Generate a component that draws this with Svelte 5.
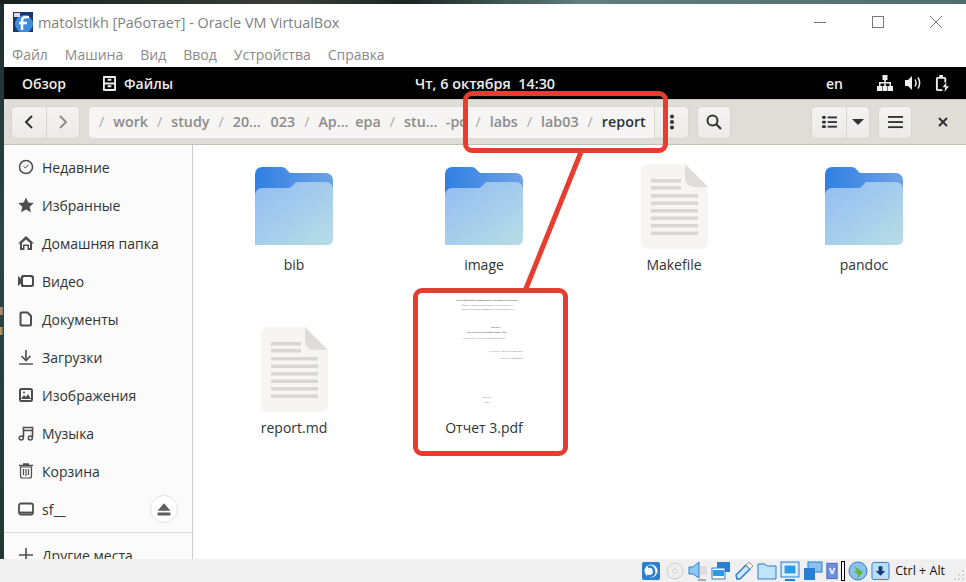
<script>
  const menu = ["Файл", "Машина", "Вид", "Ввод", "Устройства", "Справка"];
  const crumbs = [
    { t: "work" },
    { t: "study" },
    { t: "20… 023", short: true },
    { t: "Ар… ера", short: true },
    { t: "stu… -рс", short: true },
    { t: "labs" },
    { t: "lab03" },
  ];
  const places = [
    ["Недавние", "clock"],
    ["Избранные", "star"],
    ["Домашняя папка", "home"],
    ["Видео", "video"],
    ["Документы", "doc"],
    ["Загрузки", "down"],
    ["Изображения", "image"],
    ["Музыка", "music"],
    ["Корзина", "trash"],
    ["sf__", "drive"],
  ];
  const files = [
    { name: "bib", kind: "folder" },
    { name: "image", kind: "folder" },
    { name: "Makefile", kind: "text" },
    { name: "pandoc", kind: "folder" },
    { name: "report.md", kind: "text" },
    { name: "Отчет 3.pdf", kind: "pdf" },
  ];
  // title page of the report, as it shows in the thumbnail
  const pdfText = [
    { t: "РОССИЙСКИЙ УНИВЕРСИТЕТ ДРУЖБЫ НАРОДОВ", x: 49.5, y: 11, w: 61, bold: true },
    { t: "Факультет физико-математических и естественных наук", x: 50.5, y: 16, w: 51 },
    { t: "Кафедра прикладной информатики и теории вероятностей", x: 50.5, y: 20, w: 53 },
    { t: "ОТЧЕТ", x: 58.5, y: 38, w: 9, bold: true },
    { t: "ПО ЛАБОРАТОРНОЙ РАБОТЕ № 3", x: 50, y: 43, w: 40, bold: true },
    { t: "дисциплина: Архитектура компьютеров", x: 47, y: 49, w: 42 },
    { t: "Студент: Толстых Михаил", x: 69, y: 62, w: 34 },
    { t: "Группа: НПИбд-02-21", x: 74.5, y: 69, w: 23 },
    { t: "МОСКВА", x: 50.5, y: 108, w: 9 },
    { t: "2022", x: 50, y: 113, w: 4 },
  ];
</script>

<div class="screen">
  <div class="window">
    <header class="titlebar">
      <svg class="vbox" viewBox="0 0 20 20" width="20" height="20">
        <rect width="20" height="20" fill="#15396f" />
        <circle cx="11" cy="12" r="9" fill="#3f8bdc" />
        <path d="M9 18V9q0-4 4-4h3M6 11h8" fill="none" stroke="#fff" stroke-width="2.6" />
        <rect x="1" y="1" width="6" height="4" fill="#ddd" />
      </svg>
      <span class="title">matolstikh [Работает] - Oracle VM VirtualBox</span>
      <div class="winbtns">
        <svg viewBox="0 0 12 12" width="12" height="12"><path d="M0 6.5h12" stroke="#777" /></svg>
        <svg viewBox="0 0 12 12" width="12" height="12"><rect x=".5" y=".5" width="11" height="11" fill="none" stroke="#777" /></svg>
        <svg viewBox="0 0 12 12" width="12" height="12"><path d="M0 0l12 12M12 0L0 12" stroke="#777" /></svg>
      </div>
    </header>
    <nav class="menubar">
      {#each menu as m}<span>{m}</span>{/each}
    </nav>

    <div class="topbar">
      <span class="overview">Обзор</span>
      <span class="app">
        <svg viewBox="0 0 14 16" width="13" height="15"><path fill-rule="evenodd" fill="#eee" d="M1 0h12a1 1 0 011 1v14a1 1 0 01-1 1H1a1 1 0 01-1-1V1a1 1 0 011-1zM2 2v5h10V2zM2 9v5h10V9zM5 3h4v2H5zM5 10h4v2H5z" /></svg>
        Файлы
      </span>
      <span class="clock">Чт, 6 октября&nbsp; 14:30</span>
      <span class="lang">en</span>
      <svg class="tray net" viewBox="0 0 16 16" width="16" height="16"><path fill="#eee" d="M5.500 0h5v5h-1.700v2H14v4h2v5h-5v-5h1.500V8.500h-3.700V11H10.500v5h-5v-5h1.700V8.500H3.500V11H5v5H0v-5h2V7h5.200V5H5.500z" /></svg>
      <svg class="tray vol" viewBox="0 0 16 16" width="16" height="16"><path fill="#eee" d="M0 5h3l4-4v14l-4-4H0z" /><path fill="none" stroke="#eee" stroke-width="1.500" d="M10 4.500q2 3.500 0 7M13 2.500q3.300 5.500 0 11" /></svg>
      <svg class="tray bat" viewBox="0 0 16 18" width="15" height="17"><path fill="none" stroke="#eee" stroke-width="2" d="M8 16H3a1 1 0 01-1-1V4a1 1 0 011-1h7a1 1 0 011 1v4" /><path fill="#eee" d="M4.500 0h4v2h-4zM12 8l-4 5h3l-1 5 5-6h-3z" /></svg>
    </div>

    <div class="toolbar">
      <div class="btn-group nav">
        <button aria-label="Назад"><svg viewBox="0 0 16 16" width="16" height="16"><path d="M11 2L5 8l6 6" fill="none" stroke="#2e3436" stroke-width="2" /></svg></button>
        <button aria-label="Вперёд"><svg viewBox="0 0 16 16" width="16" height="16"><path d="M5 2l6 6-6 6" fill="none" stroke="#888a85" stroke-width="1.800" /></svg></button>
      </div>
      <div class="pathbar">
        <div class="crumbs">
          <span class="sep">/</span>
          {#each crumbs as c}
            <span class="crumb" class:short={c.short}>{c.t}</span><span class="sep">/</span>
          {/each}
          <span class="crumb current">report</span>
        </div>
        <button class="more" aria-label="Ещё"><svg viewBox="0 0 6 16" width="6" height="16"><circle cx="3" cy="2.500" r="2" /><circle cx="3" cy="8" r="2" /><circle cx="3" cy="13.500" r="2" /></svg></button>
      </div>
      <button class="tool search" aria-label="Поиск"><svg viewBox="0 0 16 16" width="16" height="16"><circle cx="6.500" cy="6.500" r="5" fill="none" stroke="#2e3436" stroke-width="2" /><path d="M10 10l5 5" stroke="#2e3436" stroke-width="2.200" /></svg></button>
      <div class="btn-group view">
        <button aria-label="Вид"><svg viewBox="0 0 16 14" width="15" height="13" fill="#2e3436"><rect width="4" height="3" rx="1" /><rect y="5" width="4" height="3" rx="1" /><rect y="10" width="4" height="3" rx="1" /><rect x="6" y=".5" width="10" height="2" /><rect x="6" y="5.500" width="10" height="2" /><rect x="6" y="10.500" width="10" height="2" /></svg></button>
        <button class="caret" aria-label="Настройки вида"><svg viewBox="0 0 12 6" width="12" height="6"><path d="M0 0h12L6 6z" fill="#2e3436" /></svg></button>
      </div>
      <button class="tool burger" aria-label="Меню"><svg viewBox="0 0 16 14" width="15" height="13" fill="#2e3436"><rect y="0" width="16" height="2" /><rect y="5.500" width="16" height="2" /><rect y="11" width="16" height="2" /></svg></button>
      <button class="closebtn" aria-label="Закрыть"><svg viewBox="0 0 10 10" width="10" height="10"><path d="M1 1l8 8M9 1L1 9" stroke="#2e3436" stroke-width="2" /></svg></button>
    </div>

    <div class="main">
      <aside class="sidebar">
        {#each places as p}
          <div class="place">
            <svg viewBox="0 0 16 16" width="16" height="16" class="picon">
              {#if p[1] === "clock"}
                <circle cx="8" cy="8" r="6.500" fill="none" stroke="#4d4d4d" stroke-width="1.500" /><path d="M5.500 7.500L7.500 9l3-3.500" fill="none" stroke="#4d4d4d" />
              {:else if p[1] === "star"}
                <path d="M8 .5l2.300 5 5.500.6-4.100 3.700 1.200 5.400L8 12.400l-4.900 2.800 1.200-5.400L.2 6.100l5.500-.6z" fill="#4d4d4d" />
              {:else if p[1] === "home"}
                <path d="M8 1L0 8.500h2V15h4.500v-4h3v4H14V8.500h2z" fill="#4d4d4d" /><path d="M4 8l4-3.500L12 8v5h-1V9.500H5V13H4z" fill="#fff" />
              {:else if p[1] === "video"}
                <path d="M0 3l3 2.500V3.500A1.500 1.500 0 014.500 2h9A2.500 2.500 0 0116 4.500v7a2.500 2.500 0 01-2.500 2.500h-9A1.500 1.500 0 013 12.500v-2L0 13z" fill="#4d4d4d" /><rect x="5" y="4" width="9" height="8" rx="1.500" fill="#fff" />
              {:else if p[1] === "doc"}
                <path d="M3.500 1.500h6l3.500 3.500v8.500a1 1 0 01-1 1h-8.500a1 1 0 01-1-1v-11a1 1 0 011-1z" fill="none" stroke="#4d4d4d" stroke-width="2" />
              {:else if p[1] === "down"}
                <path d="M8 1v10M3.500 7L8 11.500 12.500 7" fill="none" stroke="#4d4d4d" stroke-width="1.600" /><path d="M1 15h14" stroke="#4d4d4d" stroke-width="1.400" />
              {:else if p[1] === "image"}
                <rect x="2" y="2" width="12" height="12" rx="1.500" fill="none" stroke="#4d4d4d" stroke-width="2" /><path d="M3 12l3-4 2 2 2-3 3 5z" fill="#4d4d4d" /><circle cx="6" cy="5.500" r="1" fill="#4d4d4d" />
              {:else if p[1] === "music"}
                <path d="M5.500 12V2.500h9V12M5.500 5.500h9" fill="none" stroke="#4d4d4d" stroke-width="1.600" /><circle cx="3.300" cy="13" r="2" fill="none" stroke="#4d4d4d" stroke-width="1.500" /><circle cx="12.300" cy="13" r="2" fill="none" stroke="#4d4d4d" stroke-width="1.500" />
              {:else if p[1] === "trash"}
                <path d="M1 2.500h14M5 1h6" stroke="#4d4d4d" stroke-width="1.500" /><path d="M2.500 4v9a2 2 0 002 2h7a2 2 0 002-2V4zM5.500 6v6M8 6v7M10.500 6v6" fill="none" stroke="#4d4d4d" stroke-width="1.200" />
              {:else}
                <rect x="1" y="2.500" width="14" height="11" rx="2" fill="none" stroke="#4d4d4d" stroke-width="1.800" /><path d="M2 11.500h12" stroke="#4d4d4d" stroke-width="1.800" />
              {/if}
            </svg>
            <span>{p[0]}</span>
            {#if p[1] === "drive"}
              <span class="eject"><svg viewBox="0 0 12 12" width="14" height="14"><path d="M6 1l5.500 6.500H.5zM.5 9h11v2.500H.5z" fill="#5e5e5e" /></svg></span>
            {/if}
          </div>
        {/each}
        <div class="divider"></div>
        <div class="place other">
          <svg viewBox="0 0 16 16" width="16" height="16" class="picon"><path d="M8 1v14M1 8h14" stroke="#4d4d4d" stroke-width="1.600" /></svg>
          <span>Другие места</span>
        </div>
      </aside>

      <section class="files">
        {#each files as f}
          <div class="file">
            <div class="thumb">
              {#if f.kind === "folder"}
                <svg viewBox="0 0 78 78" width="78" height="78">
                  <defs>
                    <linearGradient id="back" x1="0" x2="1"><stop offset="0" stop-color="#2f7fe3" /><stop offset="1" stop-color="#6ea2e6" /></linearGradient>
                    <linearGradient id="front" x1="0.1" y1="0.1" x2="0.9" y2="1"><stop offset="0" stop-color="#97bff2" /><stop offset="1" stop-color="#b6dce6" /></linearGradient>
                  </defs>
                  <path d="M0 7a7 7 0 017-7h20q2 0 3.500 1.500L35 6h36a7 7 0 017 7v40H0z" fill="url(#back)" />
                  <path d="M0 28a7 7 0 017-7h26q2 0 3-1l5-5h30a7 7 0 017 7v51a5 5 0 01-5 5H0z" fill="url(#front)" />
                </svg>
              {:else if f.kind === "text"}
                <svg viewBox="0 0 67 85" width="67" height="85">
                  <path d="M7 0h37l23 23v55a7 7 0 01-7 7H7a7 7 0 01-7-7V7a7 7 0 017-7z" fill="#f6f5f4" />
                  <path d="M44 0l23 23H53a9 9 0 01-9-9z" fill="#deddd9" />
                  <g fill="#d8d7d3">
                    <rect x="10" y="15" width="30" height="3.500" /><rect x="10" y="22" width="30" height="3.500" />
                    <rect x="10" y="30" width="47" height="3.500" /><rect x="10" y="37.500" width="47" height="3.500" />
                    <rect x="10" y="45" width="47" height="3.500" /><rect x="10" y="52.500" width="47" height="3.500" />
                    <rect x="10" y="60" width="47" height="3.500" /><rect x="10" y="67.500" width="47" height="3.500" />
                  </g>
                </svg>
              {:else}
                <svg class="page" viewBox="0 0 94 116" width="94" height="116">
                  {#each pdfText as l}
                    <text x={l.x} y={l.y} text-anchor="middle" textLength={l.w} lengthAdjust="spacingAndGlyphs" class:bold={l.bold} class="tiny">{l.t}</text>
                  {/each}
                </svg>
              {/if}
            </div>
            <span class="label">{f.name}</span>
          </div>
        {/each}
      </section>
    </div>

    <footer class="statusbar">
      <svg class="s1" viewBox="0 0 18 20" width="18" height="20"><rect y="1" width="18" height="18" rx="2" fill="#2b7fd0" /><circle cx="9" cy="10" r="6.500" fill="#fff" /><path d="M5 15q8 1 7-5t-6-4" fill="none" stroke="#2b7fd0" stroke-width="2.500" /></svg>
      <svg class="s2" viewBox="0 0 18 18" width="18" height="18"><circle cx="9" cy="9" r="8" fill="#eee" stroke="#ccc" /><circle cx="9" cy="9" r="2" fill="#fff" stroke="#ccc" /></svg>
      <svg viewBox="0 0 20 20" width="20" height="20"><path d="M1 6h4l6-5v16l-6-4H1z" fill="#8cc8f2" stroke="#2b7fd0" /><rect x="12" y="5" width="7" height="9" fill="#ddd" /><path d="M10 19h8" stroke="#aaa" stroke-width="2" /></svg>
      <svg viewBox="0 0 20 20" width="20" height="20"><rect x="6" y="1" width="13" height="10" fill="#2b7fd0" /><rect x="1" y="7" width="13" height="11" fill="#fff" stroke="#2b7fd0" /><rect x="2" y="9" width="11" height="6" fill="#2b9be8" /></svg>
      <svg viewBox="0 0 20 20" width="20" height="20"><path d="M2 14L12 4l4 4L6 18H3z" fill="#cfe6fa" stroke="#2b7fd0" stroke-width="1.500" /><path d="M12 4l3-3 4 4-3 3z" fill="#eee" stroke="#999" /></svg>
      <svg viewBox="0 0 20 20" width="20" height="20"><path d="M1 3h7l2 2h9v13H1z" fill="#bfe3fa" stroke="#2b7fd0" /></svg>
      <svg viewBox="0 0 20 20" width="20" height="20"><rect x="1" y="1" width="18" height="15" fill="#cfe6fa" stroke="#2b7fd0" /><rect x="4" y="4" width="12" height="9" fill="#2b9be8" stroke="#fff" /><path d="M5 19h10" stroke="#2b7fd0" stroke-width="2" /></svg>
      <svg viewBox="0 0 20 20" width="20" height="20"><rect x="5" y="1" width="14" height="10" fill="#8cc0ee" stroke="#2b7fd0" /><rect x="1" y="7" width="11" height="12" fill="#2b7fd0" /></svg>
      <svg viewBox="0 0 14 20" width="12" height="20"><rect x="1" y="1" width="12" height="18" fill="#6f8fe0" stroke="#3f5fb0" /><text x="7" y="14" text-anchor="middle" class="vlabel">V</text></svg>
      <svg viewBox="0 0 4 20" width="4" height="20"><rect x=".5" y=".5" width="3" height="19" fill="#fff" stroke="#000" /></svg>
      <svg viewBox="0 0 20 20" width="20" height="20"><circle cx="10" cy="10" r="9" fill="#8cc0ee" stroke="#2b7fd0" /><path d="M6 5l9 6-6 7 1-5-4-2 3-1z" fill="#5cb82e" /></svg>
      <svg viewBox="0 0 20 20" width="19" height="20"><rect x="1" y="1" width="18" height="18" rx="2" fill="#bcdcf5" stroke="#2b7fd0" /><path d="M10 15l-5-5h3V5h4v5h3z" fill="#123f78" /></svg>
      <span class="hostkey">Ctrl + Alt</span>
      <svg class="grip" viewBox="0 0 12 12" width="12" height="12" fill="#d4d4d4"><rect x="8" y="0" width="2" height="2" /><rect x="4" y="4" width="2" height="2" /><rect x="8" y="4" width="2" height="2" /><rect x="0" y="8" width="2" height="2" /><rect x="4" y="8" width="2" height="2" /><rect x="8" y="8" width="2" height="2" /></svg>
    </footer>

    <!-- callouts drawn over the file manager -->
    <svg class="arrow" viewBox="0 0 966 582" width="966" height="582">
      <path d="M581 152L525 291" stroke="#e53d30" stroke-width="5" fill="none" />
    </svg>
    <div class="callout crumb-box"></div>
    <div class="callout pdf-box"></div>
  </div>
  <span class="desk-mark one"></span>
  <span class="desk-mark two"></span>
</div>

<style>
  :global(body) {
    margin: 0;
    background: #2d4544;
  }
  .screen {
    position: relative;
    width: 966px;
    height: 582px;
    overflow: hidden;
    padding: 4px 0 0 4px;
    box-sizing: border-box;
    background:
      linear-gradient(90deg, #16201f 0, #3a3f38 30%, #1a2423 42%, #5f7f7a 60%, #4f6f6a 100%) top / 100% 4px no-repeat,
      linear-gradient(#1d2c2c, #2c4644 40%, #233533) left / 4px 100% no-repeat;
    font-family: "Open Sans", "Noto Sans", sans-serif;
  }
  .desk-mark {
    position: absolute;
    left: 0;
    width: 3px;
    height: 8px;
  }
  .desk-mark.one {
    top: 307px;
    background: linear-gradient(90deg, #c98a44, #5f86b8);
  }
  .desk-mark.two {
    top: 327px;
    background: linear-gradient(90deg, #d9a23a, #3f6fa8);
  }
  .window {
    position: relative;
    width: 962px;
    height: 578px;
    display: flex;
    flex-direction: column;
    background: #fff;
  }
  .titlebar {
    height: 42px;
    flex: none;
    display: flex;
    align-items: center;
    padding: 0 0 6px 9px;
    box-sizing: border-box;
  }
  .vbox {
    margin-right: 5px;
  }
  .title {
    font-size: 14.4px;
    color: #808080;
  }
  .winbtns {
    margin-left: auto;
    display: flex;
    gap: 46px;
    padding-right: 24px;
  }
  .menubar {
    height: 21px;
    flex: none;
    display: flex;
    gap: 17px;
    padding-left: 8px;
    font-size: 14px;
    color: #8a8a8a;
    line-height: 18px;
  }
  .topbar {
    height: 32px;
    flex: none;
    background: #000;
    color: #eee;
    display: flex;
    align-items: center;
    font-size: 14px;
    font-weight: 600;
    padding-left: 18px;
    position: relative;
  }
  .overview {
    width: 81px;
  }
  .app {
    display: flex;
    align-items: center;
    gap: 8px;
  }
  .clock {
    position: absolute;
    left: 411px;
    font-size: 14.4px;
  }
  .lang {
    margin-left: auto;
    margin-right: 34px;
  }
  .net {
    margin-right: 12px;
  }
  .vol {
    margin-right: 14px;
  }
  .bat {
    margin-right: 16px;
  }
  .toolbar {
    height: 46px;
    flex: none;
    box-sizing: border-box;
    background: #e0ddd9;
    border-top: 1px solid #cfcbc6;
    border-bottom: 1px solid #c4bfb9;
    display: flex;
    align-items: center;
    padding: 0 0 0 7px;
  }
  button {
    padding: 0;
    margin: 0;
    font: inherit;
    background: linear-gradient(#f4f3f1, #ecebe8);
    border: 1px solid #d8d5d0;
    display: flex;
    align-items: center;
    justify-content: center;
    height: 33px;
    box-sizing: border-box;
  }
  .btn-group {
    display: flex;
  }
  .btn-group button:first-child {
    border-radius: 5px 0 0 5px;
    border-right: 0;
  }
  .btn-group button:last-child {
    border-radius: 0 5px 5px 0;
  }
  .nav button {
    width: 34.5px;
  }
  .pathbar {
    margin-left: 8px;
    display: flex;
    width: 601px;
    height: 33px;
  }
  .crumbs {
    flex: 1;
    background: #f6f5f4;
    border: 1px solid #dcd9d4;
    border-radius: 5px 0 0 5px;
    box-sizing: border-box;
    display: flex;
    align-items: center;
    font-size: 14.3px;
    font-weight: 600;
    color: #8c8c8c;
    padding: 0 0 2px 10px;
    white-space: nowrap;
    overflow: hidden;
  }
  .sep {
    font-weight: 400;
    color: #a9a9a9;
    margin: 0 9px 0 0;
  }
  .crumb {
    margin-right: 9px;
  }
  .crumb.short {
    width: 62.4px;
    flex: none;
    white-space: normal;
    text-align: justify;
    text-align-last: justify;
  }
  .crumb.current {
    color: #2e3436;
    margin: 0;
  }
  .more {
    width: 34px;
    border-left: 0;
    border-radius: 0 5px 5px 0;
  }
  .more svg {
    fill: #2e3436;
  }
  .tool {
    width: 34px;
    border-radius: 5px;
  }
  .search {
    margin-left: 8px;
  }
  .view {
    margin-left: 80px;
  }
  .view button:first-child {
    width: 35px;
  }
  .view .caret {
    width: 24px;
  }
  .burger {
    margin-left: 8px;
  }
  .closebtn {
    background: none;
    border: 0;
    width: 30px;
    margin-left: 16px;
  }
  .main {
    flex: 1;
    display: flex;
    min-height: 0;
  }
  .sidebar {
    width: 189px;
    flex: none;
    box-sizing: border-box;
    background: #fbfbfb;
    border-right: 1px solid #cfcbc6;
    padding-top: 3px;
    overflow: hidden;
    font-size: 14px;
    color: #2e3436;
  }
  .place {
    height: 38px;
    display: flex;
    align-items: center;
    padding-left: 14px;
    gap: 8px;
  }
  .picon {
    flex: none;
  }
  .eject {
    margin-left: auto;
    margin-right: 14px;
    width: 28px;
    height: 28px;
    background: #fff;
    border: 1px solid #e2e0dd;
    border-radius: 50%;
    display: flex;
    align-items: center;
    justify-content: center;
    box-sizing: border-box;
  }
  .divider {
    height: 1px;
    background: #dedcd9;
    margin-top: 4px;
  }
  .other {
    margin-top: 3px;
  }
  .files {
    flex: 1;
    display: grid;
    grid-template-columns: repeat(4, 190px);
    grid-auto-rows: 163px;
    padding: 18px 0 0 6px;
    background: #fff;
    align-content: start;
    overflow: hidden;
  }
  .file {
    display: flex;
    flex-direction: column;
    align-items: center;
    font-size: 14px;
    color: #2e3436;
  }
  .thumb {
    height: 86px;
    display: flex;
    align-items: center;
  }
  .page {
    align-self: flex-start;
    margin-top: -36px;
    overflow: visible;
  }
  .tiny {
    font-family: "Liberation Serif", serif;
    font-size: 2.3px;
    fill: #666;
  }
  .tiny.bold {
    font-weight: 700;
    fill: #333;
  }
  .label {
    margin-top: 6px;
  }
  .statusbar {
    position: absolute;
    left: -4px;
    right: 0;
    bottom: 0;
    height: 23px;
    background: #f0f0f0;
    display: flex;
    align-items: center;
    justify-content: flex-end;
    gap: 3px;
    padding-right: 21px;
    box-sizing: border-box;
  }
  .s1 {
    margin-right: 3px;
  }
  .s2 {
    margin-right: 1px;
  }
  .vlabel {
    font-size: 11px;
    font-weight: 700;
    fill: #fff;
  }
  .hostkey {
    font-size: 12.500px;
    color: #111;
    margin-left: 2px;
  }
  .grip {
    position: absolute;
    right: 0;
    bottom: 0;
  }
  .arrow {
    position: absolute;
    left: -4px;
    top: -4px;
    pointer-events: none;
  }
  .callout {
    position: absolute;
    border: 5px solid #e53d30;
    border-radius: 9px;
    box-sizing: border-box;
  }
  .crumb-box {
    left: 459px;
    top: 87px;
    width: 205px;
    height: 62px;
  }
  .pdf-box {
    left: 409px;
    top: 284px;
    width: 155px;
    height: 168px;
  }
</style>
